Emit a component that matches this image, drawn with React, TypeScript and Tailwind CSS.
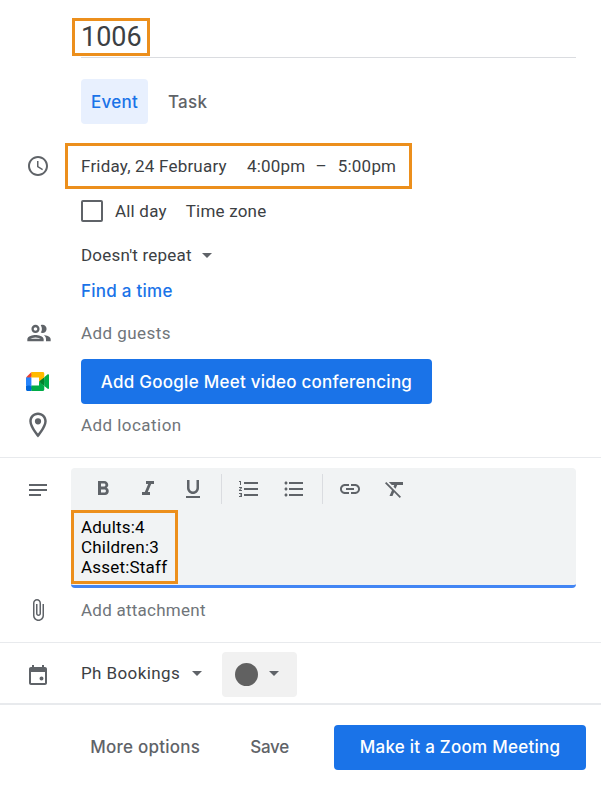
import React from "react";

const P = ({ d, size = 24, className = "" }: { d: string; size?: number; className?: string }) => (
  <svg width={size} height={size} viewBox="0 0 24 24" className={`shrink-0 fill-[#5f6368] ${className}`}>
    <path d={d} />
  </svg>
);

const icons = {
  clock: "M11.99 2C6.47 2 2 6.48 2 12s4.47 10 9.99 10C17.52 22 22 17.52 22 12S17.52 2 11.99 2zM12 20c-4.42 0-8-3.58-8-8s3.58-8 8-8 8 3.58 8 8-3.58 8-8 8zm.5-13H11v6l5.25 3.15.75-1.23-4.5-2.67z",
  people: "M9 13.75c-2.34 0-7 1.17-7 3.5V19h14v-1.75c0-2.33-4.66-3.5-7-3.5zM4.34 17c.84-.58 2.87-1.25 4.66-1.25s3.82.67 4.66 1.25H4.34zM9 12c1.93 0 3.5-1.57 3.5-3.5S10.93 5 9 5 5.5 6.57 5.5 8.5 7.07 12 9 12zm0-5c.83 0 1.5.67 1.5 1.5S9.83 10 9 10s-1.5-.67-1.5-1.5S8.17 7 9 7zm7.04 6.81c1.16.84 1.96 1.96 1.96 3.44V19h4v-1.75c0-2.02-3.5-3.17-5.96-3.44zM15 12c1.93 0 3.5-1.57 3.5-3.5S16.93 5 15 5c-.54 0-1.04.13-1.5.35.63.89 1 1.98 1 3.15s-.37 2.26-1 3.15c.46.22.96.35 1.5.35z",
  place: "M12 2C8.13 2 5 5.13 5 9c0 5.25 7 13 7 13s7-7.75 7-13c0-3.87-3.13-7-7-7zM7 9c0-2.76 2.24-5 5-5s5 2.24 5 5c0 2.88-2.88 7.19-5 9.88C9.92 16.21 7 11.85 7 9zM12 6.5a2.5 2.5 0 1 0 0 5 2.5 2.5 0 0 0 0-5z",
  notes: "M21 11H3v2h18zM3 16h12v2H3zM21 6H3v2h18z",
  bold: "M15.6 10.79c.97-.67 1.65-1.77 1.65-2.79 0-2.26-1.75-4-4-4H7v14h7.04c2.09 0 3.71-1.7 3.71-3.79 0-1.52-.86-2.82-2.15-3.42zM10 6.5h3c.83 0 1.5.67 1.5 1.5s-.67 1.5-1.5 1.5h-3v-3zm3.5 9H10v-3h3.5c.83 0 1.5.67 1.5 1.5s-.67 1.5-1.5 1.5z",
  italic: "M10 4v3h2.21l-3.42 8H6v3h8v-3h-2.21l3.42-8H18V4z",
  underline: "M12 17c3.31 0 6-2.69 6-6V3h-2.5v8c0 1.93-1.57 3.5-3.5 3.5S8.5 12.93 8.5 11V3H6v8c0 3.31 2.69 6 6 6zm-7 2v2h14v-2H5z",
  numbered: "M2 17h2v.5H3v1h1v.5H2v1h3v-4H2v1zm1-9h1V4H2v1h1v3zm-1 3h1.8L2 13.1v.9h3v-1H3.2L5 10.9V10H2v1zm5-6v2h14V5H7zm0 14h14v-2H7v2zm0-6h14v-2H7v2z",
  bulleted: "M4 10.5c-.83 0-1.5.67-1.5 1.5s.67 1.5 1.5 1.5 1.5-.67 1.5-1.5-.67-1.5-1.5-1.5zm0-6c-.83 0-1.5.67-1.5 1.5S3.17 7.5 4 7.5 5.5 6.83 5.5 6 4.83 4.5 4 4.5zm0 12c-.83 0-1.5.68-1.5 1.5s.68 1.5 1.5 1.5 1.5-.68 1.5-1.5-.67-1.5-1.5-1.5zM7 19h14v-2H7v2zm0-6h14v-2H7v2zm0-8v2h14V5H7z",
  link: "M3.9 12c0-1.71 1.39-3.1 3.1-3.1h4V7H7c-2.76 0-5 2.24-5 5s2.24 5 5 5h4v-1.9H7c-1.71 0-3.1-1.39-3.1-3.1zM8 13h8v-2H8v2zm9-6h-4v1.9h4c1.71 0 3.1 1.39 3.1 3.1s-1.39 3.1-3.1 3.1h-4V17h4c2.76 0 5-2.24 5-5s-2.24-5-5-5z",
  clear: "M3.27 5L2 6.27l6.97 6.97L6.5 19h3l1.57-3.66L16.73 21 18 19.73 3.55 5.27 3.27 5zM6 5v.18L8.82 8h2.4l-.72 1.68 2.1 2.1L14.21 8H20V5H6z",
  attach: "M16.5 6v11.5c0 2.21-1.79 4-4 4s-4-1.79-4-4V5c0-1.38 1.12-2.5 2.5-2.5s2.5 1.12 2.5 2.5v10.5c0 .55-.45 1-1 1s-1-.45-1-1V6H10v9.5c0 1.38 1.12 2.5 2.5 2.5s2.5-1.12 2.5-2.5V5c0-2.21-1.79-4-4-4S7 2.79 7 5v12.5c0 3.04 2.46 5.5 5.5 5.5s5.5-2.46 5.5-5.5V6h-1.5z",
  event: "M19 4h-1V2h-2v2H8V2H6v2H5c-1.1 0-2 .9-2 2v14c0 1.1.9 2 2 2h14c1.1 0 2-.9 2-2V6c0-1.1-.9-2-2-2zm0 16H5V9h14v11zM15.5 13.5a2 2 0 1 0 0 4 2 2 0 0 0 0-4z",
};

const Caret = ({ className = "" }: { className?: string }) => (
  <span className={`w-0 h-0 border-x-[5px] border-x-transparent border-t-[5px] border-t-[#5f6368] ${className}`} />
);

const Meet = () => (
  <svg width="23" height="19" viewBox="0 0 87.5 72" className="shrink-0">
    <path fill="#00832d" d="M49.5 36l8.53 9.75 11.47 7.33 2-17.02-2-16.64-11.69 6.44z" />
    <path fill="#0066da" d="M0 51.5V66c0 3.315 2.685 6 6 6h14.5l3-10.96-3-9.54-9.95-3z" />
    <path fill="#e94235" d="M20.5 0L0 20.5l10.55 3 9.95-3 2.95-9.41z" />
    <path fill="#2684fc" d="M20.5 20.5H0v31h20.5z" />
    <path fill="#00ac47" d="M82.6 8.68L69.5 19.42v33.66l13.16 10.79c1.97 1.54 4.85.135 4.85-2.37V11c0-2.535-2.945-3.925-4.91-2.32zM49.5 36v15.5h-29V72h43c3.315 0 6-2.685 6-6V53.08z" />
    <path fill="#ffba00" d="M63.5 0h-43v20.5h29V36l20-16.57V6c0-3.315-2.685-6-6-6z" />
  </svg>
);

const Row = ({ icon, className = "", children }: { icon?: React.ReactNode; className?: string; children: React.ReactNode }) => (
  <div className={`flex items-center ${className}`}>
    <div className="w-[81px] pl-[26px] flex items-center shrink-0">{icon}</div>
    {children}
  </div>
);

const Tool = ({ d }: { d: string }) => (
  <div className="w-[45px] flex justify-center">
    <P d={d} />
  </div>
);

const heading = "font-['Inter',sans-serif] font-medium text-[17px] tracking-[0.25px]";

export default function App() {
  return (
    <div className="w-[601px] h-[787px] overflow-hidden bg-white flex flex-col text-[17px] tracking-[0.2px] text-[#3c4043] font-['Roboto',sans-serif]">
      <div className="ml-[81px] mr-[25px] h-[58px] border-b border-[#dadce0] relative shrink-0">
        <div className="absolute left-[-9px] top-[18px] w-[78px] h-[38px] border-[3px] border-[#ec8f1c] pl-[6px] flex items-center text-[27px] tracking-normal leading-none">
          1006
        </div>
      </div>

      <div className={`ml-[81px] mt-[21px] h-[45px] flex items-center shrink-0 ${heading}`}>
        <div className="w-[67px] h-[45px] pt-[2px] rounded-[4px] bg-[#e8f0fe] text-[#1a73e8] flex items-center justify-center">Event</div>
        <div className="ml-[20px] pt-[2px] text-[#5f6368]">Task</div>
      </div>

      <div className="mt-[19px] h-[46px] flex items-center shrink-0">
        <div className="w-[65px] pl-[26px] shrink-0"><P d={icons.clock} /></div>
        <div className="w-[347px] h-[46px] border-[3px] border-[#ec8f1c] pl-[13px] pt-[2px] flex items-center whitespace-nowrap">
          <span className="w-[166px]">Friday, 24 February</span>
          <span>4:00pm</span>
          <span className="ml-[10px]">–</span>
          <span className="ml-[11px]">5:00pm</span>
        </div>
      </div>

      <Row className="mt-[11px] h-[22px] shrink-0">
        <div className="w-[22px] h-[22px] border-2 border-[#5f6368] rounded-[2px]" />
        <span className="ml-[12px] pt-[2px]">All day</span>
        <span className="ml-[19px] pt-[2px]">Time zone</span>
      </Row>

      <Row className="mt-[21px] h-[24px] shrink-0">
        <span className="pt-[2px]">Doesn't repeat</span>
        <Caret className="ml-[10px]" />
      </Row>

      <Row className="mt-[11px] h-[24px] shrink-0">
        <span className={`text-[#1a73e8] pt-[4px] ${heading}`}>Find a time</span>
      </Row>

      <Row className="mt-[19px] h-[24px] shrink-0" icon={<P d={icons.people} size={28} className="-ml-[1px] -my-[2px]" />}>
        <span className="text-[#70757a] pt-[2px] tracking-[0.45px]">Add guests</span>
      </Row>

      <Row className="mt-[14px] h-[45px] shrink-0" icon={<Meet />}>
        <div className={`w-[351px] h-[45px] pt-[3px] rounded-[4px] bg-[#1a73e8] text-white flex items-center justify-center whitespace-nowrap ${heading}`}>
          Add Google Meet video conferencing
        </div>
      </Row>

      <Row className="mt-[9px] h-[24px] shrink-0" icon={<P d={icons.place} size={30} className="-ml-[3px] -my-[3px]" />}>
        <span className="text-[#70757a] pt-[2px] tracking-[0.45px]">Add location</span>
      </Row>

      <div className="mt-[20px] h-px bg-[#e8eaed] shrink-0" />

      <div className="mt-[10px] h-[120px] flex shrink-0">
        <div className="w-[71px] pl-[26px] pt-[10px] shrink-0"><P d={icons.notes} /></div>
        <div className="w-[505px] h-[120px] rounded-[4px] bg-[#f1f3f4] border-b-[3px] border-[#4285f4] flex flex-col">
          <div className="h-[42px] flex items-center pl-[9px] shrink-0">
            <Tool d={icons.bold} />
            <Tool d={icons.italic} />
            <Tool d={icons.underline} />
            <div className="w-px h-[30px] bg-[#dadce0] ml-[6px] mr-[4px]" />
            <Tool d={icons.numbered} />
            <Tool d={icons.bulleted} />
            <div className="w-px h-[30px] bg-[#dadce0] ml-[6px] mr-[4px]" />
            <Tool d={icons.link} />
            <Tool d={icons.clear} />
          </div>
          <div className="w-[107px] h-[74px] border-[3px] border-[#ec8f1c] pl-[7px] flex flex-col justify-center text-black tracking-[0.2px] leading-[20px] whitespace-nowrap">
            <div>Adults:4</div>
            <div>Children:3</div>
            <div>Asset:Staff</div>
          </div>
        </div>
      </div>

      <Row className="mt-[10px] h-[24px] shrink-0" icon={<P d={icons.attach} />}>
        <span className="text-[#70757a] pt-[2px] tracking-[0.25px]">Add attachment</span>
      </Row>

      <div className="mt-[20px] h-px bg-[#e8eaed] shrink-0" />

      <Row className="mt-[9px] h-[45px] shrink-0" icon={<P d={icons.event} />}>
        <span className="w-[111px] pb-[2px] tracking-[0.4px]">Ph Bookings</span>
        <Caret className="-mt-[2px]" />
        <div className="ml-[20px] w-[75px] h-[45px] rounded-[4px] bg-[#f1f1f1] flex items-center pl-[13px]">
          <div className="w-[23px] h-[23px] rounded-full bg-[#616161]" />
          <Caret className="ml-[11px] -mt-[3px]" />
        </div>
      </Row>

      <div className="mt-[6px] h-[2px] bg-[#e8eaed] shrink-0" />

      <div className={`mt-[20px] h-[45px] flex items-center justify-end pr-[15px] shrink-0 whitespace-nowrap ${heading}`}>
        <span className="text-[#5f6368]">More options</span>
        <span className="text-[#5f6368] ml-[50px] tracking-[-0.25px]">Save</span>
        <div className="ml-[45px] w-[252px] h-[45px] rounded-[4px] bg-[#1a73e8] text-white flex items-center justify-center">
          Make it a Zoom Meeting
        </div>
      </div>
    </div>
  );
}
